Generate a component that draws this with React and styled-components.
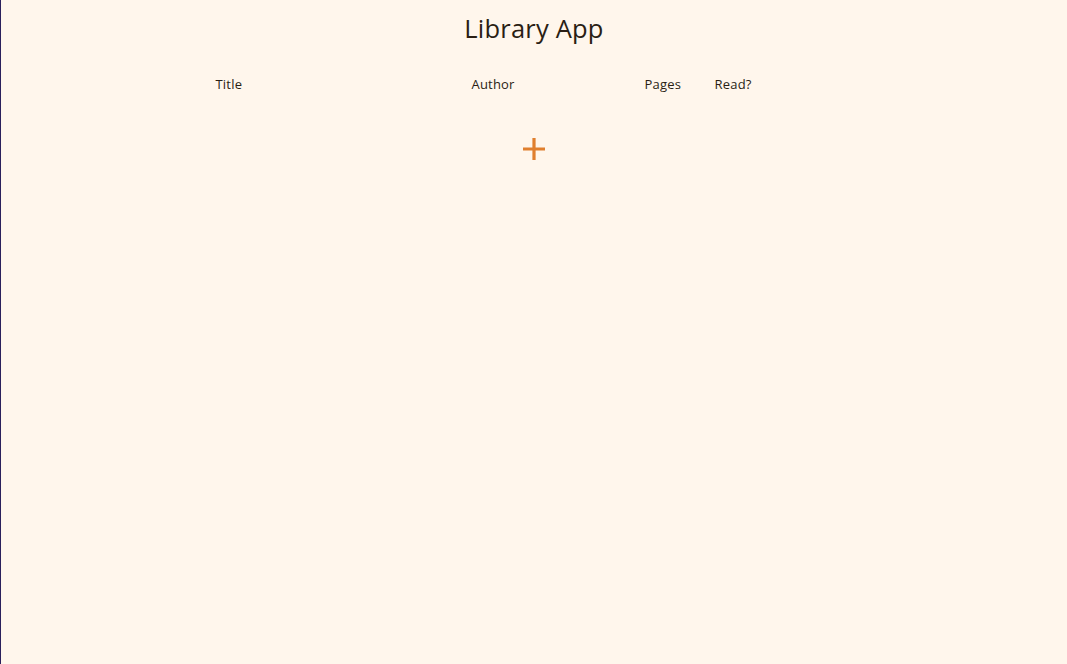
import React from "react";
import styled, { createGlobalStyle } from "styled-components";

const GlobalStyle = createGlobalStyle`
    html, body {
        margin: 0;
        padding: 0;
        background: #fff6ec;
    }
    body {
        font-family: "Open Sans", "Liberation Sans", sans-serif;
        color: #2a1e14;
    }
`;

const Page = styled.div`
    min-height: 664px;
    box-sizing: border-box;
    border-left: 1px solid #2a1f5c;
    display: flex;
    flex-direction: column;
    align-items: center;
`;

const Heading = styled.h1`
    margin: 10px 0 0;
    font-size: 25.5px;
    font-weight: 500;
    line-height: 36px;
    letter-spacing: 0.2px;
`;

const HeaderRow = styled.div`
    margin-top: 28px;
    width: 637px;
    display: grid;
    grid-template-columns: 256px 173px 70px 1fr;
    font-size: 13px;
    font-weight: 500;
    line-height: 20px;
    letter-spacing: 0.2px;
`;

const HeaderCell = styled.div`
    padding: 0;
`;

const AddButton = styled.button`
    margin-top: 41px;
    width: 28px;
    height: 28px;
    padding: 0;
    border: none;
    background: transparent;
    cursor: pointer;
    display: flex;
    align-items: center;
    justify-content: center;
`;

const columns = ["Title", "Author", "Pages", "Read?"];

const App = () => {
    return (
        <>
            <GlobalStyle />
            <Page>
                <Heading>Library App</Heading>
                <HeaderRow>
                    {columns.map((col) => (
                        <HeaderCell key={col}>{col}</HeaderCell>
                    ))}
                </HeaderRow>
                <AddButton aria-label="Add book">
                    <svg width="24" height="24" viewBox="0 0 24 24">
                        <path d="M12 1v22M1 12h22" stroke="#e07f2e" strokeWidth="3.2" fill="none" />
                    </svg>
                </AddButton>
            </Page>
        </>
    );
};

export default App;
